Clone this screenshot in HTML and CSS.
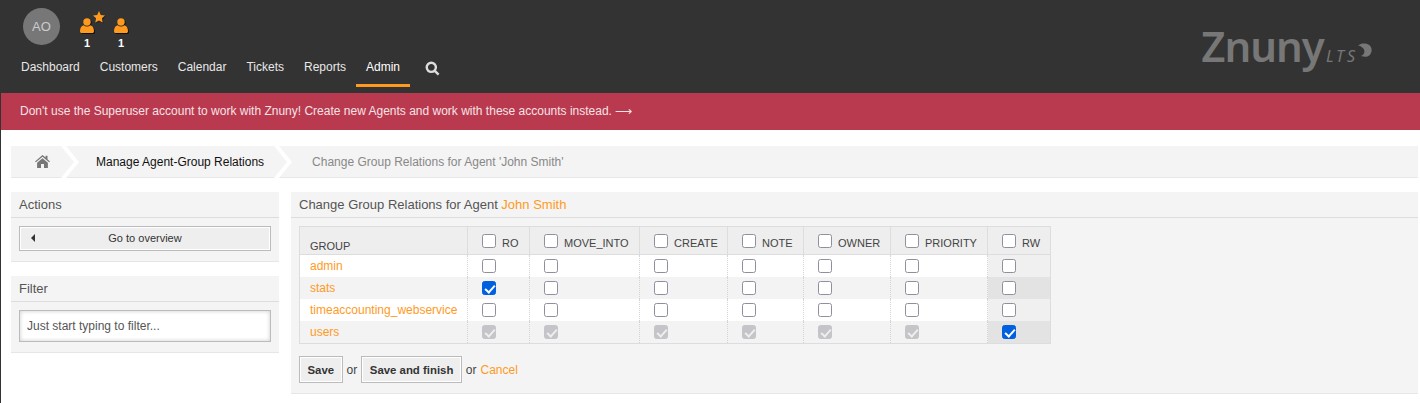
FILE: index.html
```html
<!DOCTYPE html>
<html>

<head>
  <meta charset="utf-8" />
  <title>Change Group Relations for Agent</title>
  <link rel="stylesheet" href="styles.css">
</head>

<body>
  <header class="top">
    <div class="top_left">
      <div class="toolbar">
        <div class="avatar">AO</div>
        <a class="stat stat_first">
          <svg class="person" viewBox="0 0 14 15"><circle cx="7" cy="4" r="3.7"/><path d="M0 13.2C0 9.8 1.6 7.6 3.6 7.2 4.6 8 5.7 8.4 7 8.4S9.4 8 10.4 7.2C12.4 7.6 14 9.8 14 13.2 14 14.3 13.3 15 12.2 15H1.8C.7 15 0 14.3 0 13.2Z"/></svg>
          <svg class="star" viewBox="0 0 12 12"><path d="M6 0 7.8 3.9 12 4.4 8.9 7.3 9.7 11.5 6 9.4 2.3 11.5 3.1 7.3 0 4.4 4.2 3.9Z"/></svg>
          <span class="count">1</span>
        </a>
        <a class="stat">
          <svg class="person" viewBox="0 0 14 15"><circle cx="7" cy="4" r="3.7"/><path d="M0 13.2C0 9.8 1.6 7.6 3.6 7.2 4.6 8 5.7 8.4 7 8.4S9.4 8 10.4 7.2C12.4 7.6 14 9.8 14 13.2 14 14.3 13.3 15 12.2 15H1.8C.7 15 0 14.3 0 13.2Z"/></svg>
          <span class="count">1</span>
        </a>
      </div>
      <nav class="nav">
        <a>Dashboard</a>
        <a>Customers</a>
        <a>Calendar</a>
        <a>Tickets</a>
        <a>Reports</a>
        <a class="selected">Admin</a>
        <a class="nav_search">
          <svg viewBox="0 0 15 15" width="15" height="15"><circle cx="6.3" cy="6.3" r="4.6"/><path d="M9.8 9.8 13.6 13.6"/></svg>
        </a>
      </nav>
    </div>
    <div class="logo">
      <span class="logo_name">Znuny</span><span class="logo_lts">LTS</span>
      <svg class="logo_dot" viewBox="0 0 14 14" width="14" height="14"><path d="M0 2.6C1.8 1 4.4 .4 7 .6 11 1 13.6 3.6 13.6 7 13.6 11 10.8 13.8 7.6 13.8 6 13.8 4.4 13.6 3 13 5 12 6.4 10.4 6.4 8.4 6.4 5.6 3.6 3.4 0 2.6Z"/></svg>
    </div>
  </header>

  <div class="notice">Don't use the Superuser account to work with Znuny! Create new Agents and work with these accounts instead. ⟶</div>

  <div class="content">
    <div class="crumbs">
      <a class="crumb_home">
        <svg viewBox="0 0 16 14" width="15" height="13"><path d="M8 0 0 6.9 .9 7.9 8 1.9 15.1 7.9 16 6.9 13.4 4.6V.8H11.3V2.8ZM2.2 8.4V14H6.4V9.8H9.6V14H13.8V8.4L8 3.4Z"/></svg>
      </a>
      <svg class="chevron" viewBox="0 0 18 32" width="18" height="32"><path d="M0 0H5L18 16 5 32H0L13 16Z"/></svg>
      <a class="crumb_link">Manage Agent-Group Relations</a>
      <svg class="chevron" viewBox="0 0 18 32" width="18" height="32"><path d="M0 0H5L18 16 5 32H0L13 16Z"/></svg>
      <span class="crumb_last">Change Group Relations for Agent 'John Smith'</span>
    </div>

    <div class="columns">
      <aside class="sidebar">
        <section class="box">
          <h2>Actions</h2>
          <div class="box_body">
            <a class="overview_btn"><i class="arrow"></i><span>Go to overview</span></a>
          </div>
        </section>
        <section class="box">
          <h2>Filter</h2>
          <div class="box_body">
            <input class="filter" type="text" placeholder="Just start typing to filter..." />
          </div>
        </section>
      </aside>

      <section class="box main">
        <h2>Change Group Relations for Agent <a>John Smith</a></h2>
        <div class="box_body">
          <table class="relations">
            <thead>
              <tr>
                <th class="group">GROUP</th>
                <th class="c1"><label><input type="checkbox" />RO</label></th>
                <th class="c2"><label><input type="checkbox" />MOVE_INTO</label></th>
                <th class="c3"><label><input type="checkbox" />CREATE</label></th>
                <th class="c4"><label><input type="checkbox" />NOTE</label></th>
                <th class="c5"><label><input type="checkbox" />OWNER</label></th>
                <th class="c6"><label><input type="checkbox" />PRIORITY</label></th>
                <th class="c7"><label><input type="checkbox" />RW</label></th>
              </tr>
            </thead>
            <tbody>
              <tr>
                <td><a>admin</a></td>
                <td><input type="checkbox" /></td>
                <td><input type="checkbox" /></td>
                <td><input type="checkbox" /></td>
                <td><input type="checkbox" /></td>
                <td><input type="checkbox" /></td>
                <td><input type="checkbox" /></td>
                <td class="rw"><input type="checkbox" /></td>
              </tr>
              <tr>
                <td><a>stats</a></td>
                <td><input type="checkbox" checked /></td>
                <td><input type="checkbox" /></td>
                <td><input type="checkbox" /></td>
                <td><input type="checkbox" /></td>
                <td><input type="checkbox" /></td>
                <td><input type="checkbox" /></td>
                <td class="rw"><input type="checkbox" /></td>
              </tr>
              <tr>
                <td><a>timeaccounting_webservice</a></td>
                <td><input type="checkbox" /></td>
                <td><input type="checkbox" /></td>
                <td><input type="checkbox" /></td>
                <td><input type="checkbox" /></td>
                <td><input type="checkbox" /></td>
                <td><input type="checkbox" /></td>
                <td class="rw"><input type="checkbox" /></td>
              </tr>
              <tr>
                <td><a>users</a></td>
                <td><input type="checkbox" checked disabled /></td>
                <td><input type="checkbox" checked disabled /></td>
                <td><input type="checkbox" checked disabled /></td>
                <td><input type="checkbox" checked disabled /></td>
                <td><input type="checkbox" checked disabled /></td>
                <td><input type="checkbox" checked disabled /></td>
                <td class="rw"><input type="checkbox" checked /></td>
              </tr>
            </tbody>
          </table>
          <div class="actions">
            <button type="button">Save</button> or
            <button type="button">Save and finish</button> or
            <a>Cancel</a>
          </div>
        </div>
      </section>
    </div>
  </div>
</body>

</html>
```

FILE: styles.css
```css
* {
  box-sizing: border-box;
}

html,
body {
  margin: 0;
  height: 403px;
  overflow: hidden;
}

body {
  background-color: #fff;
  border-left: 1px solid #333;
  font-family: "Liberation Sans", Arial, sans-serif;
  font-size: 12px;
  color: #444;
}

a {
  color: #ff9a1f;
}

/* header */
.top {
  display: flex;
  justify-content: space-between;
  height: 93px;
  margin-left: -1px;
  background-color: #333;
}

.toolbar {
  display: flex;
  height: 51px;
  padding: 8px 0 0 23px;
}

.avatar {
  width: 37px;
  height: 37px;
  border-radius: 50%;
  background-color: #777;
  color: #ccc;
  font-size: 13px;
  line-height: 37px;
  text-align: center;
}

.stat {
  position: relative;
  display: flex;
  flex-direction: column;
  align-items: center;
  width: 14px;
  margin: 10px 0 0 20px;
}

.stat_first {
  margin-right: 0;
}

.person {
  width: 14px;
  height: 15px;
  fill: #ff9a1f;
  filter: drop-shadow(1px 1px 0 #111);
}

.star {
  position: absolute;
  top: -7px;
  left: 13px;
  width: 12px;
  height: 12px;
  fill: #ff9a1f;
  filter: drop-shadow(1px 1px 0 #222);
}

.count {
  margin-top: 3px;
  color: #fff;
  font-size: 11px;
  font-weight: bold;
  line-height: 14px;
}

.nav {
  display: flex;
  height: 36px;
  padding-left: 11px;
}

.nav a {
  height: 36px;
  padding: 0 10px;
  color: #e8e8e8;
  line-height: 33px;
}

.nav a.selected {
  color: #fff;
  border-bottom: 3px solid #ff9a1f;
}

.nav a.nav_search {
  margin-left: 5px;
  padding-top: 10px;
  line-height: 1;
}

.nav_search circle,
.nav_search path {
  fill: none;
  stroke: #ddd;
  stroke-width: 2.4;
}

.logo {
  display: flex;
  align-items: baseline;
  height: 70px;
  padding: 21px 48px 0 0;
  color: #777;
}

.logo_name {
  font-family: "Noto Sans", sans-serif;
  font-size: 42px;
  font-weight: 600;
  letter-spacing: -1px;
  line-height: 50px;
}

.logo_lts {
  margin-left: 2px;
  font-family: "Noto Sans", sans-serif;
  font-size: 16px;
  font-style: italic;
  letter-spacing: 3px;
}

.logo_dot {
  align-self: flex-start;
  margin: 22px 0 0 0;
  fill: #777;
}

.notice {
  height: 37px;
  padding-left: 19px;
  background-color: #b9394f;
  color: #f6e3e6;
  font-size: 12px;
  line-height: 37px;
}

/* breadcrumb */
.content {
  padding: 16px 2px 0 10px;
}

.crumbs {
  display: flex;
  align-items: center;
  height: 32px;
  background-color: #f4f4f4;
  border-bottom: 1px solid #e8e8e8;
}

.crumb_home {
  width: 50px;
  padding: 2px 0 0 24px;
}

.crumb_home svg {
  fill: #777;
}

.chevron {
  flex: none;
  fill: #fff;
}

.crumb_link {
  padding: 0 10px 0 17px;
  color: #111;
}

.crumb_last {
  padding-left: 20px;
  color: #888;
}

/* panels */
.columns {
  display: flex;
  align-items: flex-start;
  gap: 12px;
  margin-top: 14px;
}

.sidebar {
  flex: none;
  display: flex;
  flex-direction: column;
  gap: 14px;
  width: 268px;
}

.box {
  background-color: #f4f4f4;
  border-bottom: 1px solid #e6e6e6;
}

.main {
  flex: 1;
}

.box h2 {
  height: 26px;
  margin: 0;
  padding-left: 8px;
  border-bottom: 1px solid #ddd;
  color: #555;
  font-size: 13px;
  font-weight: normal;
  line-height: 26px;
}

.box_body {
  padding: 8px 8px 10px;
}

.overview_btn {
  display: flex;
  height: 25px;
  border: 1px solid #bbb;
  background-color: #eee;
  color: #333;
  line-height: 23px;
  box-shadow: inset 0 0 0 1px #fff;
}

.overview_btn span {
  flex: 1;
  padding-right: 15px;
  text-align: center;
  font-size: 11px;
}

.arrow {
  width: 0;
  height: 0;
  margin: 7px 0 0 11px;
  border: 4px solid transparent;
  border-left: 0;
  border-right: 4px solid #333;
}

.filter {
  display: block;
  width: 100%;
  height: 32px;
  padding: 0 7px;
  border: 1px solid #bbb;
  background-color: #fff;
  box-shadow: inset 0 0 4px #ccc;
  font-family: inherit;
  font-size: 12px;
}

.filter::placeholder {
  color: #555;
  opacity: 1;
}

/* relations table */
.relations {
  width: 752px;
  border-collapse: collapse;
  table-layout: fixed;
  margin-top: 0;
  border: 1px solid #ddd;
}

.relations th {
  height: 28px;
  padding: 0;
  background-color: #eee;
  border-left: 1px solid #ddd;
  border-bottom: 1px solid #ddd;
  color: #444;
  font-size: 11px;
  font-weight: normal;
  text-align: left;
  vertical-align: top;
}

.relations th.group {
  width: 168px;
  padding: 13px 0 0 10px;
}

.relations th label {
  display: flex;
  align-items: center;
  height: 27px;
  padding-top: 4px;
}

.c1 { width: 62px; }
.c2 { width: 110px; }
.c3 { width: 88px; }
.c4 { width: 76px; }
.c5 { width: 87px; }
.c6 { width: 97px; }

.relations td {
  height: 22px;
  padding: 0 0 0 14px;
  border-left: 1px dotted #d4d4d4;
  background-color: #fff;
  line-height: 14px;
}

.relations tbody tr:last-child td {
  height: 23px;
}

.relations td:first-child {
  padding-left: 10px;
  border-left: 0;
}

.relations tbody tr:nth-child(even) td {
  background-color: #f3f3f3;
}

.relations td.rw {
  background-color: #f0f0f0;
}

.relations tbody tr:nth-child(even) td.rw {
  background-color: #e3e3e3;
}

.relations input {
  position: relative;
  display: block;
  flex: none;
  width: 14px;
  height: 14px;
  margin: 0;
  appearance: none;
  background-color: #fff;
  border: 1px solid #8f8f9d;
  border-radius: 2.5px;
}

.relations th input {
  margin: -4px 6px 0 14px;
}

.relations input:checked {
  background-color: #0060df;
  border-color: #0060df;
}

.relations input:disabled {
  background-color: #c4c4c9;
  border-color: #c4c4c9;
}

.relations input:checked::after {
  content: "";
  position: absolute;
  left: 4px;
  top: 1px;
  width: 4px;
  height: 8px;
  border: solid #fff;
  border-width: 0 2px 2px 0;
  transform: rotate(42deg);
}

.relations input:disabled::after {
  border-color: #eee;
}

.actions {
  display: flex;
  align-items: center;
  gap: 4px;
  margin-top: 12px;
  margin-bottom: 0;
}

.actions button {
  height: 27px;
  padding: 0 7.5px;
  border: 1px solid #bbb;
  background-color: #eee;
  box-shadow: inset 0 0 0 1px #fff;
  color: #333;
  font-family: inherit;
  font-size: 11.4px;
  font-weight: bold;
}
```
